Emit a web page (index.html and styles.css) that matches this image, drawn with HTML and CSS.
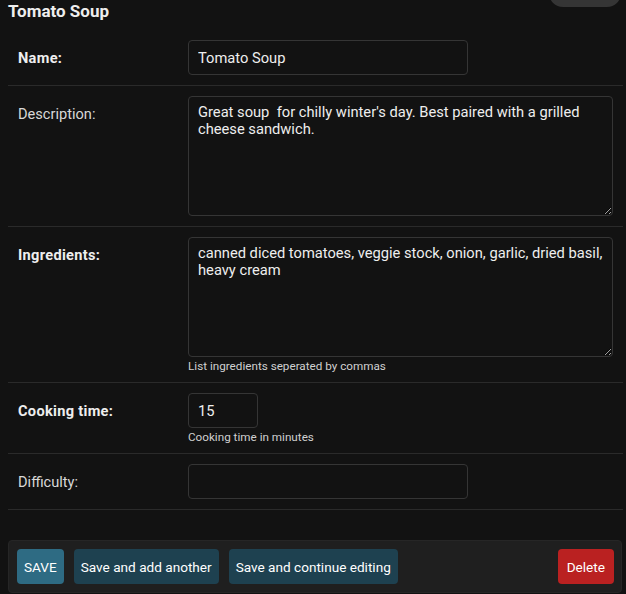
FILE: index.html
```html
<!DOCTYPE html>
<html lang="en">
<head>
<meta charset="utf-8">
<title>Change recipe | Tomato Soup</title>
<link rel="stylesheet" href="styles.css">
</head>
<body>
<div class="page">
  <a class="history-tab" href="#" aria-label="History"></a>
  <h2 class="title">Tomato Soup</h2>
  <form class="change-form">
    <fieldset class="module">
      <div class="form-row">
        <label class="label required" for="id_name">Name:</label>
        <div class="field">
          <input class="text-input wide" id="id_name" type="text" value="Tomato Soup">
        </div>
      </div>
      <div class="form-row">
        <label class="label" for="id_description">Description:</label>
        <div class="field">
          <textarea class="text-area" id="id_description">Great soup  for chilly winter's day. Best paired with a grilled cheese sandwich.</textarea>
        </div>
      </div>
      <div class="form-row">
        <label class="label required" for="id_ingredients">Ingredients:</label>
        <div class="field">
          <textarea class="text-area" id="id_ingredients">canned diced tomatoes, veggie stock, onion, garlic, dried basil, heavy cream</textarea>
          <div class="help">List ingredients seperated by commas</div>
        </div>
      </div>
      <div class="form-row">
        <label class="label required" for="id_cooking_time">Cooking time:</label>
        <div class="field">
          <input class="text-input narrow" id="id_cooking_time" type="text" value="15">
          <div class="help">Cooking time in minutes</div>
        </div>
      </div>
      <div class="form-row">
        <label class="label" for="id_difficulty">Difficulty:</label>
        <div class="field">
          <input class="text-input wide" id="id_difficulty" type="text" value="">
        </div>
      </div>
    </fieldset>
    <div class="submit-row">
      <button type="button" class="btn btn-default">SAVE</button>
      <button type="button" class="btn">Save and add another</button>
      <button type="button" class="btn">Save and continue editing</button>
      <button type="button" class="btn btn-delete">Delete</button>
    </div>
  </form>
</div>
</body>
</html>
```

FILE: styles.css
```css
html {
  color-scheme: dark;
}
body {
  margin: 0;
  background: #121212;
  color: #eeeeee;
  font-family: Roboto, "Noto Sans", sans-serif;
  font-size: 14px;
  overflow: hidden;
}
.page {
  position: relative;
  padding: 0 4px 0 8px;
  height: 594px;
}
.history-tab {
  position: absolute;
  top: -10px;
  left: 549px;
  width: 72px;
  height: 17px;
  background: #353535;
  border-radius: 0 0 14px 14px;
}
.title {
  margin: 0;
  font-size: 17px;
  font-weight: 700;
  line-height: 22px;
  color: #eeeeee;
}
.change-form {
  margin: 8px 0 0;
}
.module {
  margin: 0;
  padding: 0;
  border: 0;
}
.form-row {
  display: flex;
  padding: 10px;
  border-bottom: 1px solid #2a2a2a;
}
.label {
  flex: 0 0 160px;
  padding: 8px 10px 0 0;
  line-height: 20px;
  font-size: 14.6px;
  color: #d8d8d8;
}
.label.required {
  font-weight: 700;
  letter-spacing: 0.3px;
  color: #eeeeee;
}
.field {
  display: flex;
  flex-direction: column;
  align-items: flex-start;
}
.text-input,
.text-area {
  box-sizing: border-box;
  margin: 0;
  background: #121212;
  color: #eeeeee;
  border: 1px solid #353535;
  border-radius: 4px;
  font-family: Roboto, "Noto Sans", sans-serif;
  font-size: 14.7px;
  outline: none;
}
.text-input {
  height: 35px;
  padding: 0 9px;
}
.text-input.wide {
  width: 280px;
}
.text-input.narrow {
  width: 70px;
}
.text-area {
  width: 425px;
  height: 120px;
  padding: 7px 9px;
  line-height: 17px;
  resize: both;
  display: block;
}
.help {
  margin-top: 3px;
  font-size: 11.7px;
  line-height: 12px;
  color: #d0d0d0;
}
.submit-row {
  display: flex;
  gap: 10px;
  margin-top: 30px;
  padding: 8px 7px 8px 8px;
  background: #1f1f1f;
  border: 1px solid #262626;
  border-radius: 4px;
}
.btn {
  height: 35px;
  padding: 0 7px;
  border: 0;
  border-radius: 4px;
  background: #1e4150;
  color: #ffffff;
  font-family: Roboto, "Noto Sans", sans-serif;
  font-size: 13.6px;
  cursor: pointer;
}
.btn-default {
  background: #2e6b83;
}
.btn-delete {
  margin-left: auto;
  padding: 0 9px;
  background: #ba2121;
}
```
